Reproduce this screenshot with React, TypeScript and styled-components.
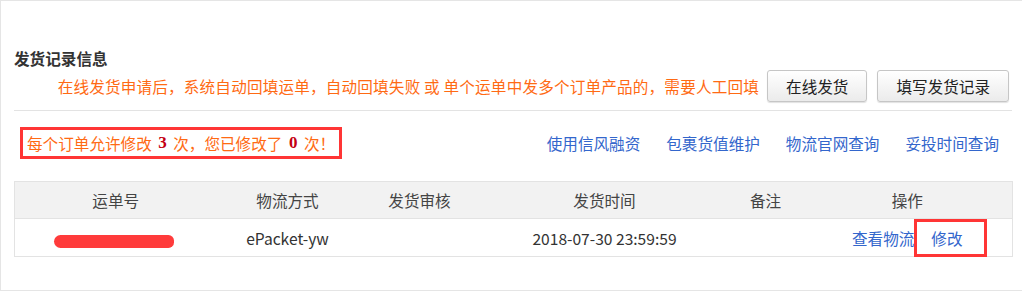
import styled, { createGlobalStyle } from 'styled-components'

const GlobalStyle = createGlobalStyle`
  html, body {
    margin: 0;
    padding: 0;
    background: #fff;
  }
  body {
    font-family: "Noto Sans CJK SC", "Liberation Sans", sans-serif;
    font-size: 15.6px;
    color: #333;
    text-spacing-trim: space-all;
  }
`

const columns = [
  { key: 'no', title: '运单号', width: 202 },
  { key: 'way', title: '物流方式', width: 142 },
  { key: 'audit', title: '发货审核', width: 122 },
  { key: 'time', title: '发货时间', width: 248 },
  { key: 'memo', title: '备注', width: 74 },
  { key: 'op', title: '操作', width: 210 },
]

const links = ['使用信风融资', '包裹货值维护', '物流官网查询', '妥投时间查询']

export default function App() {
  return (
    <>
      <GlobalStyle />
      <Panel>
        <Title>发货记录信息</Title>
        <ActionRow>
          <Hint>在线发货申请后，系统自动回填运单，自动回填失败 或 单个运单中发多个订单产品的，需要人工回填</Hint>
          <Button>在线发货</Button>
          <Button>填写发货记录</Button>
        </ActionRow>
        <NoticeRow>
          <Notice>
            每个订单允许修改 <Count>3</Count> 次，您已修改了 <Count>0</Count> 次！
          </Notice>
          <LinkList>
            {links.map((l) => (
              <Link key={l}>{l}</Link>
            ))}
          </LinkList>
        </NoticeRow>
        <Table>
          <colgroup>
            {columns.map((c) => (
              <col key={c.key} style={{ width: c.width }} />
            ))}
          </colgroup>
          <thead>
            <tr>
              {columns.map((c) => (
                <Th key={c.key}>{c.title}</Th>
              ))}
            </tr>
          </thead>
          <tbody>
            <tr>
              <Td>
                <Redacted />
              </Td>
              <Td>ePacket-yw</Td>
              <Td></Td>
              <Td>2018-07-30 23:59:59</Td>
              <Td></Td>
              <Td>
                <Link>查看物流</Link>
                <EditLink>修改</EditLink>
              </Td>
            </tr>
          </tbody>
        </Table>
      </Panel>
    </>
  )
}

const Panel = styled.div`
  box-sizing: border-box;
  width: 1022px;
  height: 291px;
  border-top: 1px solid #e5e5e5;
  border-left: 1px solid #e5e5e5;
  border-bottom: 1px solid #e5e5e5;
  padding: 47px 10px 0 13px;
`

const Title = styled.h3`
  margin: 0;
  font-size: 15.6px;
  line-height: 20px;
  font-weight: 700;
  color: #333;
`

const ActionRow = styled.div`
  display: flex;
  align-items: center;
  justify-content: flex-end;
  gap: 10px;
  margin-top: 2px;
  padding: 0 3px 8px 0;
  border-bottom: 1px solid #e3e3e3;
`

const Hint = styled.span`
  color: #ff6a13;
  line-height: 20px;
  letter-spacing: 0.18px;
  margin-right: -2px;
  white-space: pre;
`

const Button = styled.button`
  height: 32px;
  padding: 0 18px;
  font-family: inherit;
  font-size: 15.6px;
  color: #222;
  background: linear-gradient(#ffffff, #ebebeb);
  border: 1px solid #c6c6c6;
  border-radius: 3px;
  box-shadow: 0 1px 1px rgba(0, 0, 0, 0.12);
  cursor: pointer;
`

const NoticeRow = styled.div`
  display: flex;
  align-items: center;
  justify-content: space-between;
  margin-top: 16px;
  padding: 0 13px 0 6px;
`

const Notice = styled.div`
  box-sizing: border-box;
  width: 322px;
  height: 32px;
  display: flex;
  align-items: center;
  padding: 0 0 0 4px;
  border: 3px solid #ff3535;
  color: #ff6a13;
  white-space: pre;
`

const Count = styled.b`
  font-family: "Liberation Serif", serif;
  font-size: 17px;
  color: #c40012;
  margin: 0 3px;
`

const LinkList = styled.div`
  display: flex;
  gap: 26px;
`

const Link = styled.a`
  color: #3366cc;
  line-height: 20px;
  text-decoration: none;
  cursor: pointer;
`

const EditLink = styled(Link)`
  position: relative;
  display: inline-block;
  margin-left: 17px;

  &::after {
    content: '';
    position: absolute;
    left: -17px;
    right: -24px;
    top: -9px;
    bottom: -9px;
    border: 3px solid #ff3535;
  }
`

const Table = styled.table`
  width: 999px;
  margin-top: 22px;
  border-collapse: collapse;
  table-layout: fixed;
`

const Th = styled.th`
  height: 36px;
  padding: 0;
  font-weight: 400;
  color: #444;
  background: #f2f2f2;
  border: 1px solid #e3e3e3;
  border-left: none;
  border-right: none;
  text-align: center;

  &:first-child {
    border-left: 1px solid #e3e3e3;
  }
  &:last-child {
    border-right: 1px solid #e3e3e3;
  }
`

const Td = styled.td`
  height: 37px;
  padding: 0;
  color: #333;
  text-align: center;
  border-bottom: 1px solid #e3e3e3;
  white-space: nowrap;

  &:first-child {
    border-left: 1px solid #e3e3e3;
    padding-right: 4px;
  }
  &:last-child {
    border-right: 1px solid #e3e3e3;
  }
`

const Redacted = styled.span`
  display: inline-block;
  width: 120px;
  height: 13px;
  margin-top: 2px;
  vertical-align: middle;
  background: #ff3b3b;
  border-radius: 7px 6px 6px 7px;
`
